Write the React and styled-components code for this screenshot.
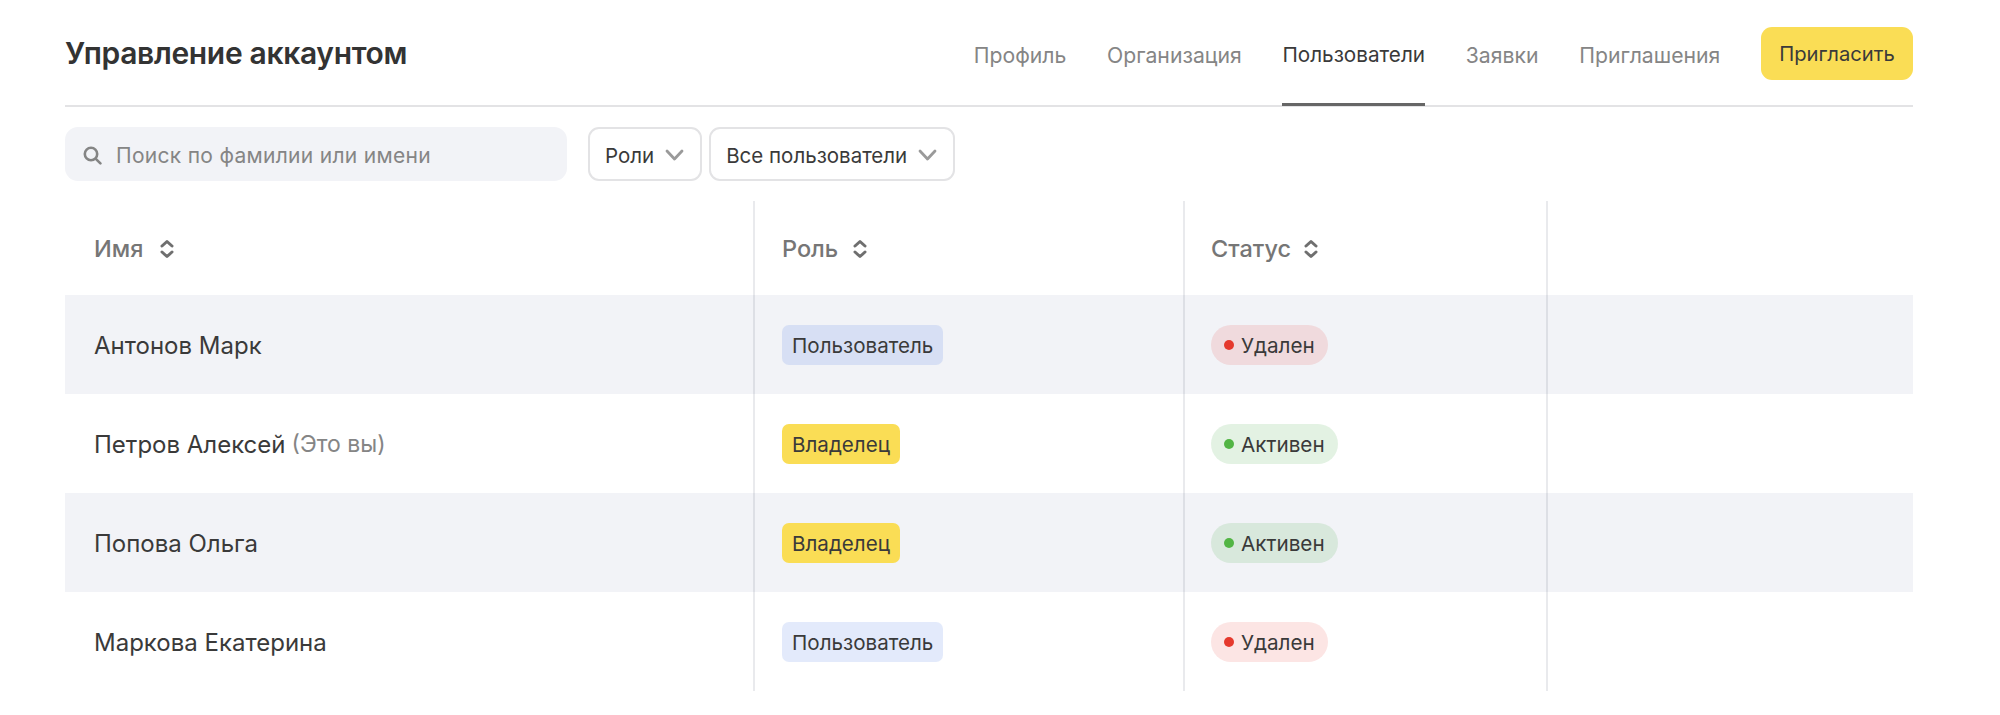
import React from 'react'
import styled, { createGlobalStyle } from 'styled-components'

const GlobalStyle = createGlobalStyle`
  body {
    margin: 0;
    background: #fff;
    font-family: Inter, "Noto Sans", sans-serif;
    color: #3a3a3a;
  }
`

const Page = styled.div`
  padding: 0 87px 0 65px;
`

const Header = styled.header`
  height: 107px;
  box-sizing: border-box;
  border-bottom: 2px solid #e3e3e5;
  display: flex;
  align-items: center;
  justify-content: space-between;
`

const Title = styled.h1`
  margin: 0;
  font-size: 30px;
  font-weight: 600;
  letter-spacing: -0.33px;
  color: #333;
`

const Nav = styled.nav`
  height: 100%;
  display: flex;
  align-items: center;
  gap: 40.7px;
`

const Tab = styled.a`
  height: 100%;
  box-sizing: border-box;
  margin-bottom: -2px;
  padding-top: 5px;
  display: flex;
  align-items: center;
  font-size: ${p => (p.$active ? '20.7px' : '21.2px')};
  color: ${p => (p.$active ? '#3a3a3a' : '#858585')};
  border-bottom: 3px solid ${p => (p.$active ? '#666' : 'transparent')};
`

const InviteButton = styled.button`
  width: 152px;
  height: 53px;
  margin-top: 1px;
  border: 0;
  border-radius: 11px;
  background: #fadd55;
  font: inherit;
  font-size: 20.2px;
  color: #3a3a3a;
`

const Filters = styled.div`
  margin-top: 20px;
  display: flex;
  align-items: stretch;
  height: 54px;
`

const Search = styled.label`
  width: 502px;
  box-sizing: border-box;
  margin-right: 21px;
  padding: 2px 0 0 18px;
  display: flex;
  align-items: center;
  gap: 14px;
  border-radius: 13px;
  background: #f2f3f7;
  font-size: 21px;
  letter-spacing: 0.3px;
  color: #858585;
`

const Select = styled.div`
  box-sizing: border-box;
  margin-right: 7px;
  padding: 2px 16px 0 15px;
  display: flex;
  align-items: center;
  gap: 11px;
  border: 2px solid #e3e3e5;
  border-radius: 11px;
  font-size: 20.5px;
  color: #3a3a3a;
`

const Table = styled.div`
  margin-top: 20px;
`

const Row = styled.div`
  display: grid;
  grid-template-columns: 690px 430px 363px 1fr;
  height: ${p => (p.$head ? '94px' : '99px')};
  background: ${p => (p.$shaded ? '#f2f3f7' : 'transparent')};
`

const Cell = styled.div`
  display: flex;
  align-items: center;
  padding: 1px 0 0 ${p => p.$pad || 27}px;
  border-right: 2px solid rgba(35, 45, 80, 0.1);
  font-size: 24px;
  color: #3a3a3a;
  &:last-child {
    border-right: 0;
  }
`

const HeadCell = styled(Cell)`
  gap: ${p => p.$gap || 14}px;
  font-weight: 500;
  font-size: 23.5px;
  color: #767676;
`

const Muted = styled.span`
  margin-left: 6px;
  color: #858585;
  font-size: 23px;
`

const RoleBadge = styled.span`
  height: 40px;
  padding: 0 10px;
  display: flex;
  align-items: center;
  border-radius: 7px;
  font-size: 20.6px;
  color: #3a3a3a;
  background: ${p => (p.$owner ? '#fadd55' : 'rgba(22, 80, 222, 0.12)')};
`

const StatusPill = styled.span`
  height: 40px;
  padding: 0 13px;
  display: flex;
  align-items: center;
  gap: 7px;
  border-radius: 21px;
  font-size: 20.7px;
  color: #3a3a3a;
  background: ${p => (p.$active ? 'rgba(80, 174, 80, 0.16)' : 'rgba(230, 40, 30, 0.12)')};
  &::before {
    content: '';
    width: 10px;
    height: 10px;
    border-radius: 50%;
    background: ${p => (p.$active ? '#52b544' : '#e5392d')};
  }
`

const SearchIcon = () => (
  <svg width="19" height="19" viewBox="0 0 19 19" fill="none" stroke="#858585" strokeWidth="2.6" strokeLinecap="round">
    <circle cx="8" cy="8" r="6.2" />
    <path d="M12.8 12.8 L17.4 17.4" />
  </svg>
)

const Chevron = () => (
  <svg width="19" height="12" viewBox="0 0 19 12" fill="none" stroke="#9a9a9a" strokeWidth="2.8" strokeLinecap="round" strokeLinejoin="round">
    <path d="M2 2 L9.5 10 L17 2" />
  </svg>
)

const SortIcon = () => (
  <svg width="14" height="20" viewBox="0 0 14 20" fill="none" stroke="#6f6f6f" strokeWidth="3" strokeLinecap="round" strokeLinejoin="round">
    <path d="M2 7 L7 2.5 L12 7" />
    <path d="M2 13 L7 17.5 L12 13" />
  </svg>
)

const users = [
  { name: 'Антонов Марк', owner: false, active: false },
  { name: 'Петров Алексей', you: true, owner: true, active: true },
  { name: 'Попова Ольга', owner: true, active: true },
  { name: 'Маркова Екатерина', owner: false, active: false },
]

const tabs = ['Профиль', 'Организация', 'Пользователи', 'Заявки', 'Приглашения']

export default function App() {
  return (
    <Page>
      <GlobalStyle />
      <Header>
        <Title>Управление аккаунтом</Title>
        <Nav>
          {tabs.map(tab => (
            <Tab key={tab} $active={tab === 'Пользователи'}>{tab}</Tab>
          ))}
          <InviteButton>Пригласить</InviteButton>
        </Nav>
      </Header>
      <Filters>
        <Search>
          <SearchIcon />
          <span>Поиск по фамилии или имени</span>
        </Search>
        <Select>Роли <Chevron /></Select>
        <Select>Все пользователи <Chevron /></Select>
      </Filters>
      <Table>
        <Row $head>
          <HeadCell $pad={29} $gap={17}>Имя <SortIcon /></HeadCell>
          <HeadCell $gap={15}>Роль <SortIcon /></HeadCell>
          <HeadCell $pad={26} $gap={13}>Статус <SortIcon /></HeadCell>
          <HeadCell />
        </Row>
        {users.map((user, i) => (
          <Row key={user.name} $shaded={i % 2 === 0}>
            <Cell $pad={29}>
              {user.name}
              {user.you && <Muted>(Это вы)</Muted>}
            </Cell>
            <Cell>
              <RoleBadge $owner={user.owner}>{user.owner ? 'Владелец' : 'Пользователь'}</RoleBadge>
            </Cell>
            <Cell $pad={26}>
              <StatusPill $active={user.active}>{user.active ? 'Активен' : 'Удален'}</StatusPill>
            </Cell>
            <Cell />
          </Row>
        ))}
      </Table>
    </Page>
  )
}
